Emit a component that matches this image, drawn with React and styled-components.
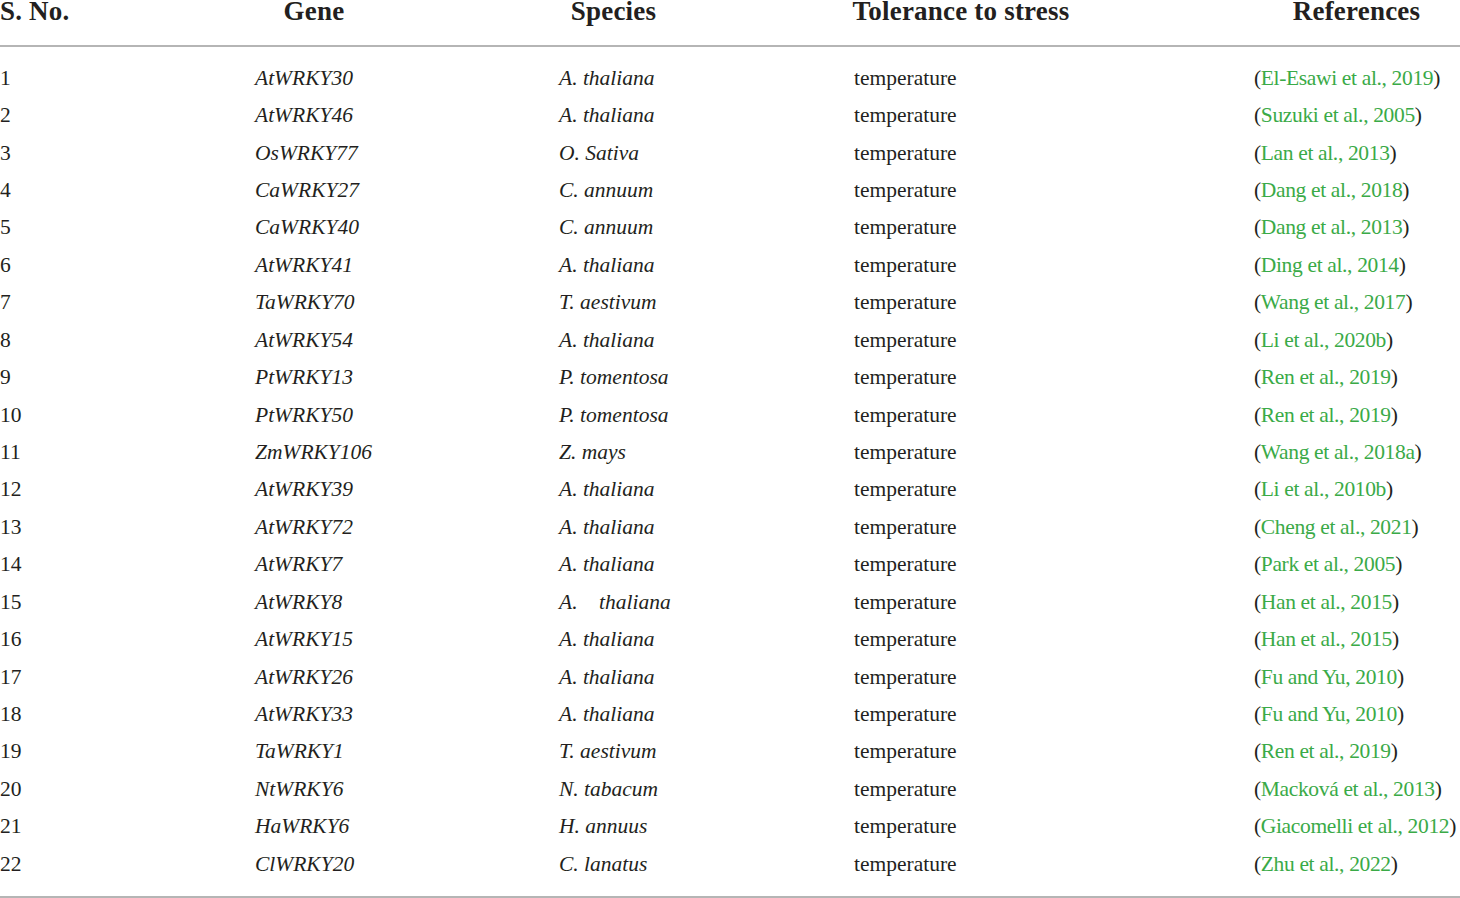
import React from "react";
import styled, { createGlobalStyle } from "styled-components";

const GlobalStyle = createGlobalStyle`
  html, body {
    margin: 0;
    padding: 0;
    background: #ffffff;
    overflow: hidden;
  }
  body {
    font-family: "Liberation Serif", "Times New Roman", serif;
    color: #231f20;
  }
`;

const TEMPLATE = "69px 118px 109px 214px 205px";

const Table = styled.div`
  width: 1460px;
  height: 898px;
  overflow: hidden;
`;

const HeadRow = styled.div`
  display: grid;
  grid-template-columns: ${TEMPLATE};
  column-gap: 186px;
  box-sizing: border-box;
  height: 49px;
  margin-top: -2px;
  border-bottom: 2px solid #b5b5b5;
`;

const HeadCell = styled.div`
  font-weight: 700;
  font-size: 27px;
  line-height: 26px;
  letter-spacing: 0.2px;
  white-space: nowrap;
  color: #231f20;
  justify-self: ${(p) => (p.$first ? "start" : "center")};
`;

const Body = styled.div`
  padding: 12.8px 0 12.7px;
  border-bottom: 2px solid #b5b5b5;
`;

const Row = styled.div`
  display: grid;
  grid-template-columns: ${TEMPLATE};
  column-gap: 186px;
  height: 37.43px;
  align-items: center;
`;

const Cell = styled.div`
  font-size: 21.5px;
  line-height: 37.43px;
  white-space: ${(p) => (p.$pre ? "pre" : "nowrap")};
  font-style: ${(p) => (p.$italic ? "italic" : "normal")};
  letter-spacing: ${(p) => (p.$tight ? "-0.35px" : "normal")};
  color: #231f20;
`;

const RefLink = styled.span`
  color: #3aaa47;
`;

const rows = [
  ["AtWRKY30", "A. thaliana", "El-Esawi et al., 2019"],
  ["AtWRKY46", "A. thaliana", "Suzuki et al., 2005"],
  ["OsWRKY77", "O. Sativa", "Lan et al., 2013"],
  ["CaWRKY27", "C. annuum", "Dang et al., 2018"],
  ["CaWRKY40", "C. annuum", "Dang et al., 2013"],
  ["AtWRKY41", "A. thaliana", "Ding et al., 2014"],
  ["TaWRKY70", "T. aestivum", "Wang et al., 2017"],
  ["AtWRKY54", "A. thaliana", "Li et al., 2020b"],
  ["PtWRKY13", "P. tomentosa", "Ren et al., 2019"],
  ["PtWRKY50", "P. tomentosa", "Ren et al., 2019"],
  ["ZmWRKY106", "Z. mays", "Wang et al., 2018a"],
  ["AtWRKY39", "A. thaliana", "Li et al., 2010b"],
  ["AtWRKY72", "A. thaliana", "Cheng et al., 2021"],
  ["AtWRKY7", "A. thaliana", "Park et al., 2005"],
  ["AtWRKY8", "A.    thaliana", "Han et al., 2015"],
  ["AtWRKY15", "A. thaliana", "Han et al., 2015"],
  ["AtWRKY26", "A. thaliana", "Fu and Yu, 2010"],
  ["AtWRKY33", "A. thaliana", "Fu and Yu, 2010"],
  ["TaWRKY1", "T. aestivum", "Ren et al., 2019"],
  ["NtWRKY6", "N. tabacum", "Macková et al., 2013"],
  ["HaWRKY6", "H. annuus", "Giacomelli et al., 2012"],
  ["ClWRKY20", "C. lanatus", "Zhu et al., 2022"],
];

export default function App() {
  return (
    <>
      <GlobalStyle />
      <Table>
        <HeadRow>
          <HeadCell $first>S. No.</HeadCell>
          <HeadCell>Gene</HeadCell>
          <HeadCell>Species</HeadCell>
          <HeadCell>Tolerance to stress</HeadCell>
          <HeadCell>References</HeadCell>
        </HeadRow>
        <Body>
          {rows.map(([gene, species, ref], i) => (
            <Row key={i}>
              <Cell>{i + 1}</Cell>
              <Cell $italic>{gene}</Cell>
              <Cell $italic $pre>{species}</Cell>
              <Cell>temperature</Cell>
              <Cell $tight>
                (<RefLink>{ref}</RefLink>)
              </Cell>
            </Row>
          ))}
        </Body>
      </Table>
    </>
  );
}
